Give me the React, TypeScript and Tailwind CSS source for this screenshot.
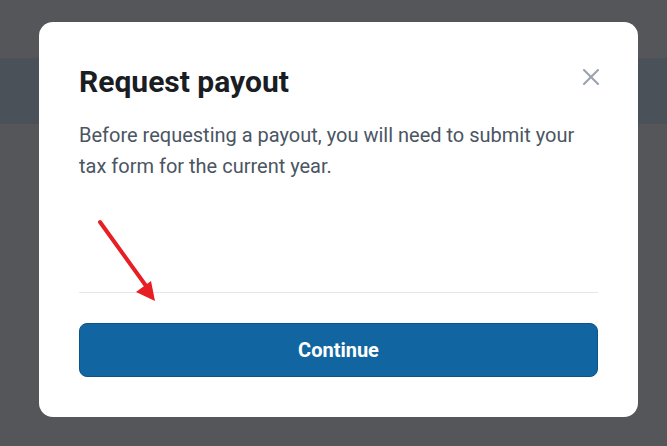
import { X } from 'lucide-react';

const App = () => (
  <div className="relative w-[667px] h-[446px] overflow-hidden bg-[#55565a] font-['Roboto',sans-serif]">
    <div className="flex flex-col h-full">
      <div className="h-[58px]" />
      <div className="h-[66px] bg-[#4a5159]" />
      <div className="flex-1" />
    </div>
    <div className="absolute left-[39px] top-[22px] w-[599px] h-[395px] bg-white rounded-[14px] px-[40px] pt-[44px] pb-[40px] flex flex-col">
      <button className="absolute right-[33px] top-[41px] text-[#9ca3af]">
        <X size={28} strokeWidth={1.8} />
      </button>
      <h2 className="text-[30px] leading-[32px] font-bold text-[#1a1d23]">Request payout</h2>
      <p className="mt-[22px] text-[20px] leading-[31px] text-[#4b5563]">
        Before requesting a payout, you will need to submit your tax form for the current year.
      </p>
      <div className="flex-1" />
      <div className="h-px bg-[#e5e7eb]" />
      <button className="mt-[30px] h-[54px] w-full rounded-[8px] bg-[#1166a1] border border-[#0d5486] text-white text-[20px] font-bold">
        Continue
      </button>
      <svg className="absolute left-0 top-0" width="599" height="395" viewBox="0 0 599 395">
        <line x1="61" y1="200" x2="110" y2="268" stroke="#e81e25" strokeWidth="4" strokeLinecap="round" />
        <polygon points="116,279 97,270 112,259" fill="#e81e25" />
      </svg>
    </div>
  </div>
);

export default App;
